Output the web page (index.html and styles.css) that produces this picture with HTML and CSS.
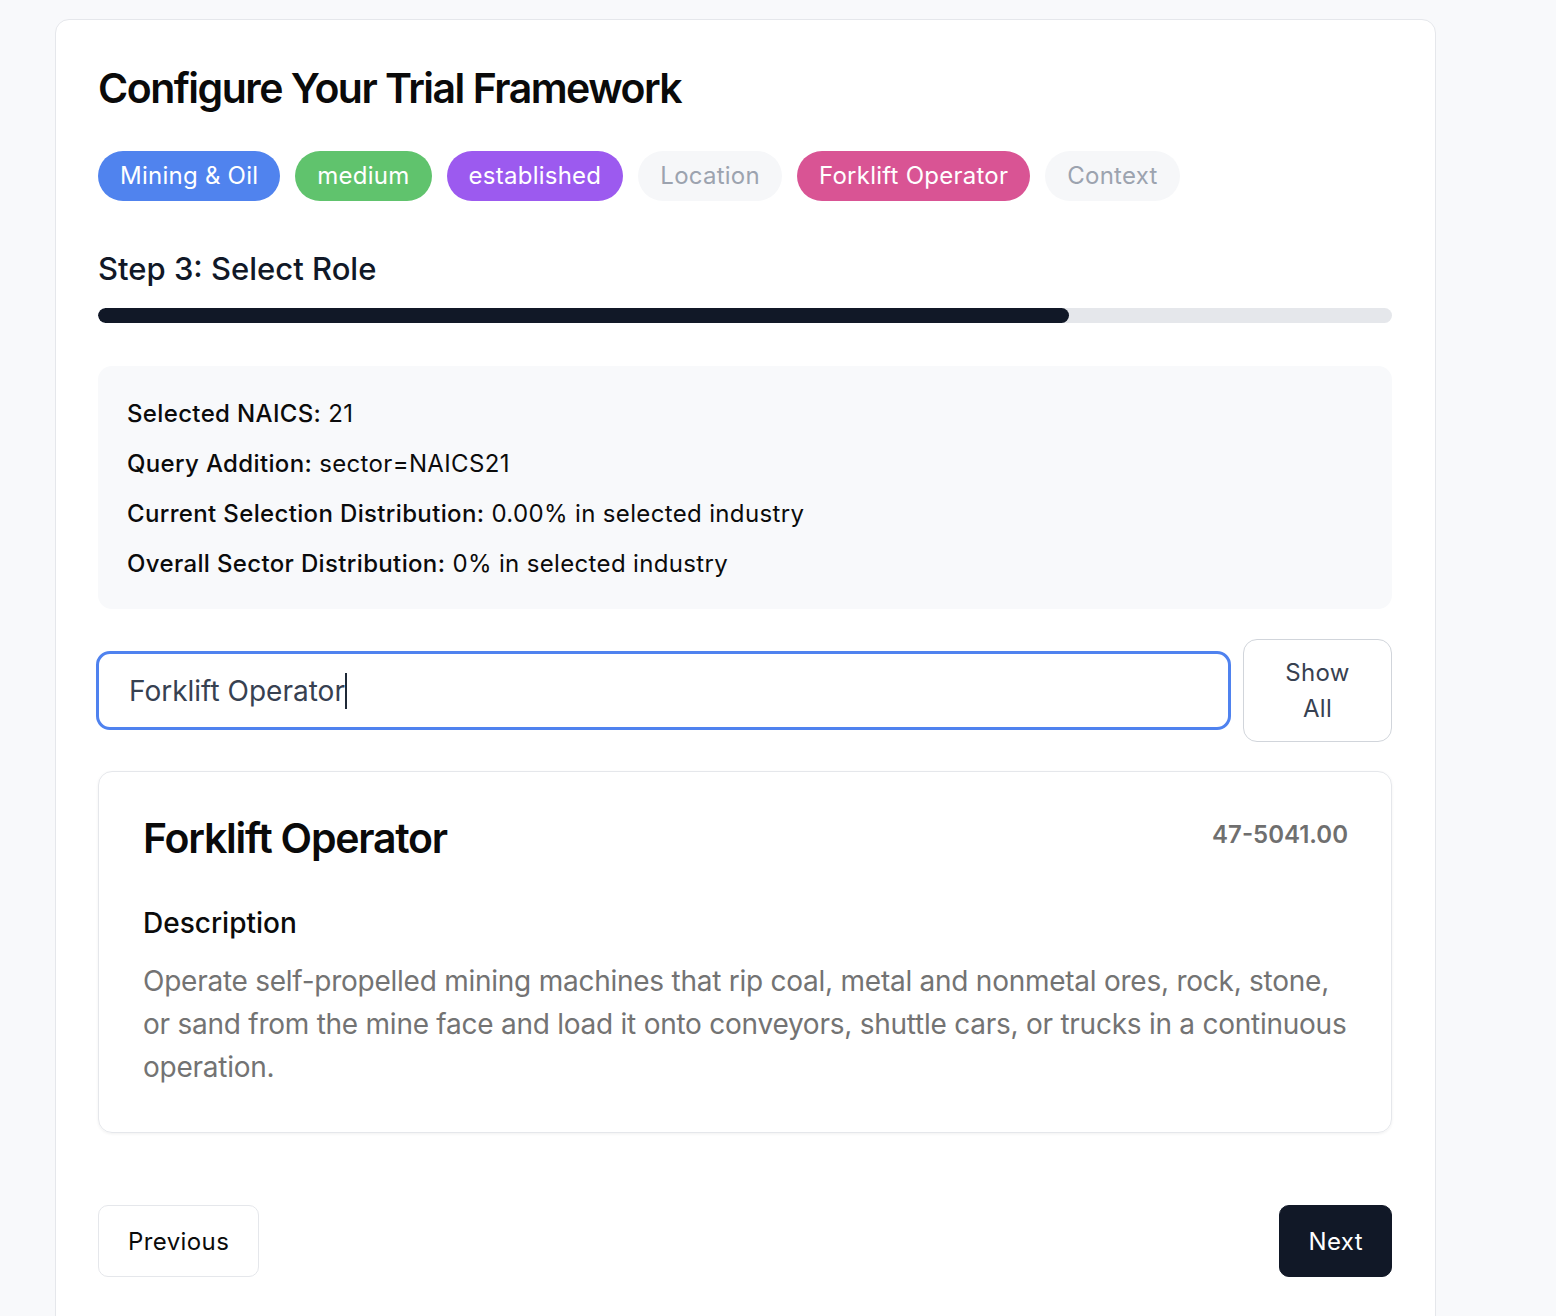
FILE: index.html
```html
<!DOCTYPE html>
<html lang="en">
<head>
<meta charset="utf-8">
<title>Configure Your Trial Framework</title>
<link rel="stylesheet" href="styles.css">
</head>
<body>
<main class="card">
  <h1 class="title">Configure Your Trial Framework</h1>
  <div class="pills">
    <span class="pill pill-blue">Mining &amp; Oil</span>
    <span class="pill pill-green">medium</span>
    <span class="pill pill-purple">established</span>
    <span class="pill pill-empty">Location</span>
    <span class="pill pill-pink">Forklift Operator</span>
    <span class="pill pill-empty">Context</span>
  </div>
  <h2 class="step">Step 3: Select Role</h2>
  <div class="progress"><div class="progress-fill" style="width:75%"></div></div>
  <section class="info">
    <p><span class="label">Selected NAICS:</span> 21</p>
    <p><span class="label">Query Addition:</span> sector=NAICS21</p>
    <p><span class="label">Current Selection Distribution:</span> 0.00% in selected industry</p>
    <p><span class="label">Overall Sector Distribution:</span> 0% in selected industry</p>
  </section>
  <div class="search-row">
    <div class="search-input"><span class="search-text">Forklift Operator</span><span class="caret"></span></div>
    <button class="show-all">Show All</button>
  </div>
  <article class="result">
    <div class="result-head">
      <h3 class="result-title">Forklift Operator</h3>
      <span class="result-code">47-5041.00</span>
    </div>
    <h4 class="desc-label">Description</h4>
    <p class="desc">Operate self-propelled mining machines that rip coal, metal and nonmetal ores, rock, stone, or sand from the mine face and load it onto conveyors, shuttle cars, or trucks in a continuous operation.</p>
  </article>
  <div class="nav">
    <button class="btn btn-outline">Previous</button>
    <button class="btn btn-dark">Next</button>
  </div>
</main>
</body>
</html>
```

FILE: styles.css
```css
* { box-sizing: border-box; }
html, body { margin: 0; padding: 0; }
body {
  background: #f8f9fb;
  font-family: Inter, "Noto Sans", "Liberation Sans", sans-serif;
  color: #0b0b0b;
  padding: 19px 0 0 55px;
  overflow: hidden;
  height: 1316px;
}
.card {
  width: 1381px;
  background: #fff;
  border: 1px solid #e5e7eb;
  border-radius: 14px;
  padding: 42px 43px 40px 42px;
  min-height: 1320px;
}
.title {
  margin: 0;
  font-size: 41px;
  line-height: 52px;
  font-weight: 600;
  letter-spacing: -0.037em;
  color: #0a0a0a;
}
.pills {
  display: flex;
  gap: 15px;
  margin-top: 37px;
}
.pill {
  height: 50px;
  padding: 0 22px;
  border-radius: 25px;
  font-size: 24px;
  line-height: 50px;
  letter-spacing: 0.25px;
  color: #fff;
  white-space: nowrap;
}
.pill-blue { background: #5083ee; }
.pill-green { background: #60c36d; }
.pill-purple { background: #9c5aef; }
.pill-pink { background: #d95494; }
.pill-empty { background: #f6f7f9; color: #9ca3af; }
.step {
  margin: 48px 0 0;
  font-size: 31px;
  line-height: 40px;
  font-weight: 500;
  color: #111827;
  letter-spacing: 0;
}
.progress {
  margin-top: 19px;
  height: 15px;
  background: #e5e7eb;
  border-radius: 8px;
  overflow: hidden;
}
.progress-fill {
  height: 100%;
  background: #111827;
  border-radius: 8px;
}
.info {
  margin-top: 43px;
  background: #f8f9fb;
  border-radius: 14px;
  padding: 33px 29px 31px;
}
.info p {
  margin: 0 0 21px;
  font-size: 24px;
  line-height: 29px;
  letter-spacing: 0.35px;
  color: #0b0b0b;
}
.info p:last-child { margin-bottom: 0; }
.label { font-weight: 500; }
.search-row {
  display: flex;
  align-items: center;
  gap: 12px;
  margin-top: 30px;
}
.search-input {
  flex: 1;
  height: 79px;
  border: 3px solid #4f82ef;
  border-radius: 14px;
  margin-left: -2px;
  padding: 0 30px;
  display: flex;
  align-items: center;
  font-size: 28px;
  color: #374151;
}
.caret {
  display: inline-block;
  width: 2px;
  height: 36px;
  background: #1f2937;
}
.show-all {
  width: 149px;
  height: 103px;
  border: 1px solid #d1d5db;
  background: #fff;
  border-radius: 14px;
  font-family: inherit;
  font-size: 24px;
  line-height: 36px;
  letter-spacing: 0.3px;
  color: #374151;
  padding: 0 30px;
}
.result {
  margin-top: 29px;
  border: 1px solid #e5e7eb;
  border-radius: 14px;
  box-shadow: 0 1px 3px rgba(0,0,0,0.06);
  padding: 40px 43px 43px 44px;
}
.result-head {
  display: flex;
  justify-content: space-between;
  align-items: flex-start;
}
.result-title {
  margin: 0;
  font-size: 41px;
  line-height: 52px;
  font-weight: 600;
  letter-spacing: -0.03em;
  color: #0a0a0a;
}
.result-code {
  margin-top: 8px;
  font-size: 24px;
  font-weight: 600;
  color: #6f6f6f;
}
.desc-label {
  margin: 41px 0 0;
  font-size: 28px;
  line-height: 36px;
  font-weight: 500;
  color: #0b0b0b;
}
.desc {
  margin: 19px 0 0;
  font-size: 28px;
  line-height: 43px;
  letter-spacing: -0.25px;
  color: #737373;
}
.nav {
  display: flex;
  justify-content: space-between;
  margin-top: 72px;
}
.btn {
  height: 72px;
  border-radius: 10px;
  font-family: inherit;
  font-size: 24px;
  letter-spacing: 0.4px;
  padding: 0 29px;
}
.btn-outline {
  background: #fff;
  border: 1px solid #e5e7eb;
  color: #0b0b0b;
}
.btn-dark {
  background: #111827;
  border: 1px solid #111827;
  color: #fff;
  padding: 0 28px;
}
```
